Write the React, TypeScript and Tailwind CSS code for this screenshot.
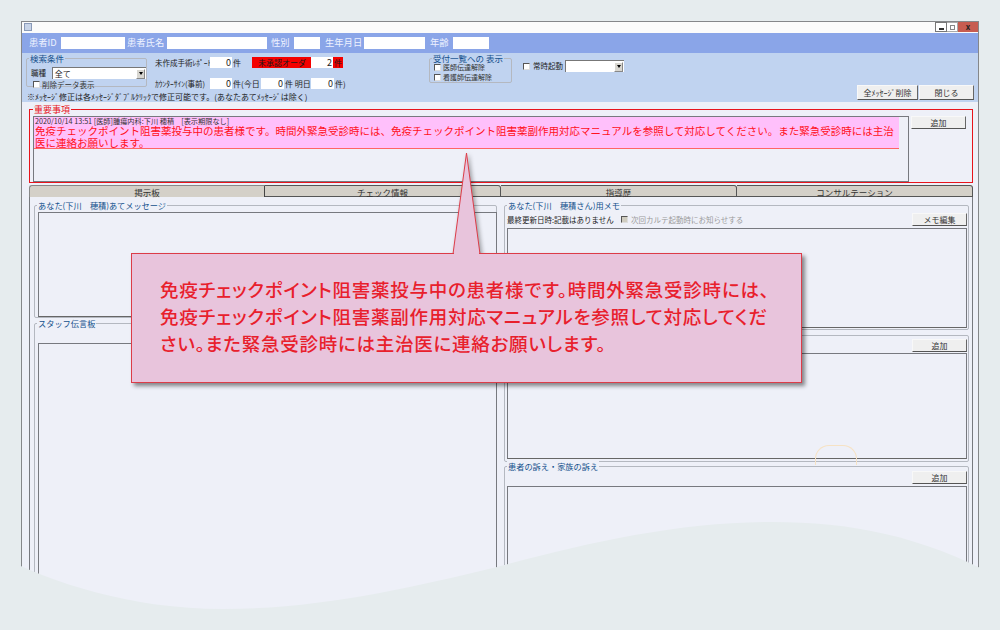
import { ReactNode } from 'react';

const GroupBox = ({ title, className, titleClass, children }: { title: string; className: string; titleClass?: string; children?: ReactNode }) => (
  <div className={`relative border border-[#b4b8c0] rounded-[2px] ${className}`}>
    {title && <span className={`absolute -top-[6px] left-[2px] px-[1px] bg-inherit leading-[11px] whitespace-nowrap text-[#14508c] ${titleClass ?? 'text-[8.2px]'}`}>{title}</span>}
    {children}
  </div>
);

const WinButton = ({ label, className }: { label: string; className: string }) => (
  <button type="button" className={`flex items-center justify-center bg-[#efefef] border border-[#f8f8f8] border-r-[#666] border-b-[#555] text-[8px] leading-none text-[#333] whitespace-nowrap ${className}`}>
    {label}
  </button>
);

const CheckBox = ({ disabled }: { disabled?: boolean }) => (
  <span className={`inline-block w-[7px] h-[7px] shrink-0 border border-t-[#555] border-l-[#555] border-r-[#ddd] border-b-[#ddd] ${disabled ? 'bg-[#cfccc0]' : 'bg-white'}`} />
);

const DropArrow = () => (
  <span className="flex items-center justify-center w-[9px] h-[10px] bg-[#d8d6d0] border border-[#888] border-t-white border-l-white">
    <span className="w-0 h-0 border-x-[2px] border-x-transparent border-t-[3px] border-t-black" />
  </span>
);

const NumBox = ({ value, className }: { value: string; className: string }) => (
  <span className={`block h-[11px] bg-white text-right pr-[1px] text-[9px] leading-[11px] text-[#222] ${className}`}>{value}</span>
);

const HeaderField = ({ label, labelClass, className }: { label: string; labelClass: string; className: string }) => (
  <>
    <span className={`text-[9.3px] leading-none text-[#eef2ff] whitespace-nowrap ${labelClass}`}>{label}</span>
    <span className={`block h-[12px] bg-white ${className}`} />
  </>
);

const ListBox = ({ className }: { className: string }) => (
  <div className={`border border-[#77797f] border-b-[#666] ${className}`} />
);

const App = () => (
  <div className="relative w-[1000px] h-[630px] overflow-hidden bg-[#e6ecee] pt-[21px] pl-[21px] font-['Noto_Sans_CJK_JP','Noto_Sans',sans-serif]">
    {/* window */}
    <div className="w-[958px] h-[620px] border border-[#85878a] border-b-0 bg-[#eef0f8] flex flex-col">
      {/* title bar */}
      <div className="h-[11px] shrink-0 bg-[#fbfbfb] flex items-start justify-between">
        <span className="ml-[2px] mt-[1px] w-[8px] h-[8px] bg-[#c8d4e8] border border-[#8a9ab8]" />
        <div className="flex items-start h-[10px]">
          <span className="w-[12px] h-[10px] bg-white border border-[#777] flex items-end justify-center pb-[1px]"><span className="w-[5px] h-[2px] bg-[#333]" /></span>
          <span className="w-[11px] h-[10px] bg-white border-y border-r border-[#aaa] flex items-center justify-center"><span className="w-[5px] h-[5px] border border-[#888]" /></span>
          <span className="w-[20px] h-[10px] bg-[#c75c50] flex items-center justify-center text-[8px] leading-none font-bold text-[#222]">x</span>
        </div>
      </div>

      {/* patient bar */}
      <div className="h-[20px] shrink-0 bg-[#8aa5e8] flex items-center pl-[7px]">
        <HeaderField label="患者ID" labelClass="w-[32px]" className="w-[64px] mr-[2px]" />
        <HeaderField label="患者氏名" labelClass="w-[40px]" className="w-[100px] mr-[4px]" />
        <HeaderField label="性別" labelClass="w-[23px]" className="w-[26px] mr-[5px]" />
        <HeaderField label="生年月日" labelClass="w-[39px]" className="w-[61px] mr-[5px]" />
        <HeaderField label="年齢" labelClass="w-[23px]" className="w-[36px]" />
      </div>

      {/* search panel */}
      <div className="h-[49px] shrink-0 bg-[#c0d3f0] flex justify-between">
        <div className="flex flex-col">
          <div className="flex items-start h-[39px]">
            <GroupBox title="検索条件" titleClass="text-[8.5px]" className="ml-[4px] mt-[5px] w-[121px] h-[29px] bg-[#c0d3f0] border-[#8f949c]">
              <div className="flex items-center mt-[8px] pl-[4px] h-[12px]">
                <span className="text-[7.5px] leading-none text-[#222] w-[21px]">職種</span>
                <span className="flex items-center justify-between w-[95px] h-[12px] bg-white border-t border-l border-[#777] pr-[1px] pl-[2px] text-[8px] leading-none text-[#222]">
                  全て
                  <DropArrow />
                </span>
              </div>
              <div className="flex items-center gap-[2px] pl-[6px] mt-[1px]">
                <CheckBox />
                <span className="text-[7.5px] leading-[9px] text-[#333]">削除データ表示</span>
              </div>
            </GroupBox>
            <div className="ml-[8px] w-[274px] flex flex-col text-[7.5px] leading-[11px] text-[#222]">
              <div className="flex items-center mt-[4px] h-[11px] whitespace-nowrap">
                <span className="w-[55px]">未作成手術ﾚﾎﾟｰﾄ</span>
                <NumBox value="0" className="w-[22px]" />
                <span className="ml-[1px] text-[8px] w-[19px]">件</span>
                <span className="flex items-center w-[91px] h-[11px] bg-[#f40000] pl-[6px] text-[#1a1a1a]">
                  <span className="w-[53px] text-[8px]">未承認オーダ</span>
                  <NumBox value="2" className="w-[22px]" />
                  <span className="ml-[1px] text-[8px]">件</span>
                </span>
              </div>
              <div className="flex items-center mt-[10px] h-[11px] whitespace-nowrap">
                <span className="w-[55px]">ｶｳﾝﾀｰｻｲﾝ(事前)</span>
                <NumBox value="0" className="w-[22px]" />
                <span className="ml-[1px] w-[28px] text-[8px]">件(今日</span>
                <NumBox value="0" className="w-[23px]" />
                <span className="ml-[1px] w-[26px] text-[8px]">件 明日</span>
                <NumBox value="0" className="w-[23px]" />
                <span className="ml-[1px] text-[8px]">件)</span>
              </div>
            </div>
            <GroupBox title="受付一覧への 表示" titleClass="text-[8.5px]" className="mt-[5px] w-[83px] h-[25px] bg-[#c0d3f0] border-[#8f949c]">
              <div className="flex flex-col gap-[3px] pl-[4px] pt-[5px]">
                <div className="flex items-center gap-[2px]"><CheckBox /><span className="text-[7px] leading-[7px] text-[#333]">医師伝達解除</span></div>
                <div className="flex items-center gap-[2px]"><CheckBox /><span className="text-[7px] leading-[7px] text-[#333]">看護師伝達解除</span></div>
              </div>
            </GroupBox>
            <div className="ml-[11px] mt-[7px] flex items-center">
              <CheckBox />
              <span className="ml-[3px] w-[32px] text-[7.5px] leading-none text-[#222] whitespace-nowrap">常時起動</span>
              <span className="flex items-center justify-end w-[59px] h-[12px] bg-white border-t border-l border-[#777] pr-[1px]"><DropArrow /></span>
            </div>
          </div>
          <p className="pl-[5px] text-[8px] leading-[9px] text-[#222] whitespace-nowrap">※ﾒｯｾｰｼﾞ修正は各ﾒｯｾｰｼﾞﾀﾞﾌﾞﾙｸﾘｯｸで修正可能です。(あなたあてﾒｯｾｰｼﾞは除く)</p>
        </div>
        <div className="flex items-end gap-[1px] pb-[2px] pr-[4px]">
          <WinButton label="全ﾒｯｾｰｼﾞ削除" className="w-[61px] h-[15px]" />
          <WinButton label="閉じる" className="w-[55px] h-[15px]" />
        </div>
      </div>

      {/* important notices */}
      <div className="ml-[7px] mt-[7px] w-[944px] h-[74px] shrink-0 relative border border-[#e8141c] bg-[#eef0f8] flex items-start pl-[3px] pt-[6px]">
        <span className="absolute -top-[6px] left-[3px] px-[1px] bg-[#eef0f8] text-[9px] leading-[11px] text-[#e8141c]">重要事項</span>
        <div className="w-[876px] h-[66px] border border-[#77797f] pr-[9px]">
          <div className="h-[32px] bg-[#ffc0fb] border-b border-[#ff6464] pl-[1px]">
            <p className="text-[7.2px] leading-[8px] text-[#333] whitespace-nowrap">2020/10/14 13:51 [医師]腫瘍内科:下川 穂積　[表示期限なし]</p>
            <p className="text-[10.5px] leading-[12px] text-[#ff1020]">免疫チェックポイント阻害薬投与中の患者様です。時間外緊急受診時には、免疫チェックポイント阻害薬副作用対応マニュアルを参照して対応してください。また緊急受診時には主治<br />医に連絡お願いします。</p>
          </div>
        </div>
        <WinButton label="追加" className="ml-[2px] w-[55px] h-[13px]" />
      </div>

      {/* tabs */}
      <div className="ml-[7px] mt-[2px] w-[944px] h-[12px] shrink-0 flex text-[8.5px] leading-[12px] text-[#333] text-center">
        <div className="w-[236px] bg-[#d4d0c8] border-t border-l border-[#888] rounded-tl-[3px] border-r border-r-[#444]">掲示板</div>
        <div className="w-[236px] bg-[#d4d0c8] border-t border-b border-r border-[#555] rounded-tr-[3px]">チェック情報</div>
        <div className="w-[236px] bg-[#d4d0c8] border-t border-b border-r border-[#555] rounded-tr-[3px]">指導歴</div>
        <div className="w-[236px] bg-[#d4d0c8] border-t border-b border-r border-[#555] rounded-tr-[3px]">コンサルテーション</div>
      </div>

      {/* tab body */}
      <div className="ml-[7px] w-[944px] flex-1 border-x border-[#77797f] flex pl-[4px] pt-[8px] gap-[7px]">
        <div className="w-[463px] flex flex-col">
          <GroupBox title="あなた(下川　穂積)あてメッセージ" className="w-[463px] h-[113px] bg-[#eef0f8] pl-[3px] pt-[6px]">
            <ListBox className="w-[459px] h-[105px]" />
          </GroupBox>
          <GroupBox title="スタッフ伝言板" className="w-[463px] h-[400px] mt-[5px] bg-[#eef0f8] pl-[3px] pt-[19px]">
            <ListBox className="w-[459px] h-[370px]" />
          </GroupBox>
        </div>
        <div className="w-[465px] flex flex-col">
          <GroupBox title="あなた(下川　穂積さん)用メモ" className="w-[465px] h-[125px] bg-[#eef0f8] pl-[2px]">
            <div className="flex items-center h-[22px] pt-[5px] pr-[1px]">
              <span className="text-[7.5px] leading-none text-[#222] w-[114px] whitespace-nowrap">最終更新日時:記載はありません</span>
              <CheckBox disabled />
              <span className="ml-[3px] text-[7.5px] leading-none text-[#9a9a9a] whitespace-nowrap">次回カルテ起動時にお知らせする</span>
              <WinButton label="メモ編集" className="ml-auto w-[55px] h-[13px]" />
            </div>
            <ListBox className="w-[460px] h-[100px]" />
          </GroupBox>
          <GroupBox title="" className="w-[465px] h-[127px] mt-[5px] bg-[#eef0f8] pl-[2px]">
            <div className="flex justify-end h-[17px] pt-[3px] pr-[1px]">
              <WinButton label="追加" className="w-[55px] h-[13px]" />
            </div>
            <ListBox className="w-[460px] h-[106px]" />
          </GroupBox>
          <GroupBox title="患者の訴え・家族の訴え" className="w-[465px] h-[200px] mt-[4px] bg-[#eef0f8] pl-[2px]">
            <div className="flex justify-end h-[19px] pt-[4px] pr-[1px]">
              <WinButton label="追加" className="w-[55px] h-[13px]" />
            </div>
            <ListBox className="w-[460px] h-[170px]" />
          </GroupBox>
        </div>
      </div>
    </div>

    {/* faint cursor outline */}
    <div className="absolute left-[815px] top-[445px] w-[42px] h-[20px] border border-b-0 border-[#f6e2c4] rounded-t-[14px]" />

    {/* callout tail */}
    <svg className="absolute left-[440px] top-[150px] drop-shadow-[2px_2px_2px_rgba(0,0,0,0.35)]" width="50" height="106" viewBox="0 0 50 106">
      <path d="M13 104 L26.5 3 L40 104" fill="#e8c4dc" stroke="#dc3c48" strokeWidth="1" />
    </svg>

    {/* callout */}
    <div className="absolute left-[131px] top-[253px] w-[671px] h-[130px] bg-[#e8c4dc] border border-[#dc3c48] shadow-[3px_3px_4px_rgba(0,0,0,0.45)] pl-[28px] pt-[22px]">
      <p className="text-[18.5px] leading-[27px] font-medium text-[#e8202c] tracking-[0.75px] whitespace-nowrap [font-feature-settings:'palt']">
        免疫チェックポイント阻害薬投与中の患者様です。時間外緊急受診時には、<br />
        免疫チェックポイント阻害薬副作用対応マニュアルを参照して対応してくだ<br />
        さい。また緊急受診時には主治医に連絡お願いします。
      </p>
    </div>
    <svg className="absolute left-[440px] top-[250px]" width="50" height="6" viewBox="0 0 50 6">
      <rect x="14" y="0" width="25" height="6" fill="#e8c4dc" />
    </svg>

    {/* bottom wave */}
    <svg className="absolute left-0 bottom-0" width="1000" height="130" viewBox="0 0 1000 130">
      <path d="M0 56 C50 82 130 109 223 109 C320 109 410 88 497 67 C590 42 680 22 772 22 C850 22 920 35 1000 78 L1000 130 L0 130 Z" fill="#e6ecee" />
    </svg>
  </div>
);

export default App;
